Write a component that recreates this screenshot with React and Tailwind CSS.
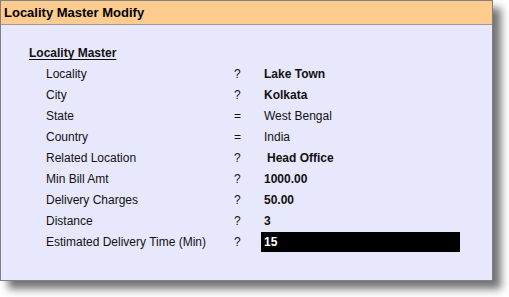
const rows = [
  { label: "Locality", op: "?", value: "Lake Town", bold: true },
  { label: "City", op: "?", value: "Kolkata", bold: true },
  { label: "State", op: "=", value: "West Bengal" },
  { label: "Country", op: "=", value: "India" },
  { label: "Related Location", op: "?", value: "Head Office", bold: true, indent: true },
  { label: "Min Bill Amt", op: "?", value: "1000.00", bold: true },
  { label: "Delivery Charges", op: "?", value: "50.00", bold: true },
  { label: "Distance", op: "?", value: "3", bold: true },
];

const App = () => {
  return (
    <div
      className="w-[509px] h-[297px] bg-white text-[12px] text-[#111]"
      style={{ fontFamily: '"Liberation Sans", Arial, sans-serif' }}
    >
      <div className="w-[493px] h-[281px] border border-[#808080] bg-[#e8e8fd] shadow-[8px_8px_8px_rgba(0,0,0,0.55)]">
        <div className="h-[24px] bg-[#ffcc8f] border-b border-[#9a9a9a] pl-[3px] text-[13px] font-bold leading-[23px] text-black">
          Locality Master Modify
        </div>
        <div className="pt-[18px]">
          <div className="h-[21px] leading-[21px] pl-[28px] font-bold">
            <span className="underline underline-offset-2">Locality Master</span>
          </div>
          {rows.map((r) => (
            <div key={r.label} className="flex h-[21px] leading-[21px]">
              <span className="w-[233px] pl-[45px]">{r.label}</span>
              <span className="w-[30px]">{r.op}</span>
              <span className={(r.bold ? "font-bold " : "") + (r.indent ? "pl-[3px]" : "")}>
                {r.value}
              </span>
            </div>
          ))}
          <div className="flex h-[21px] leading-[21px]">
            <span className="w-[233px] pl-[45px]">Estimated Delivery Time (Min)</span>
            <span className="w-[27px]">?</span>
            <span className="w-[199px] h-[20px] leading-[20px] bg-black text-white font-bold pl-[3px]">
              15
            </span>
          </div>
        </div>
      </div>
    </div>
  );
};

export default App;
